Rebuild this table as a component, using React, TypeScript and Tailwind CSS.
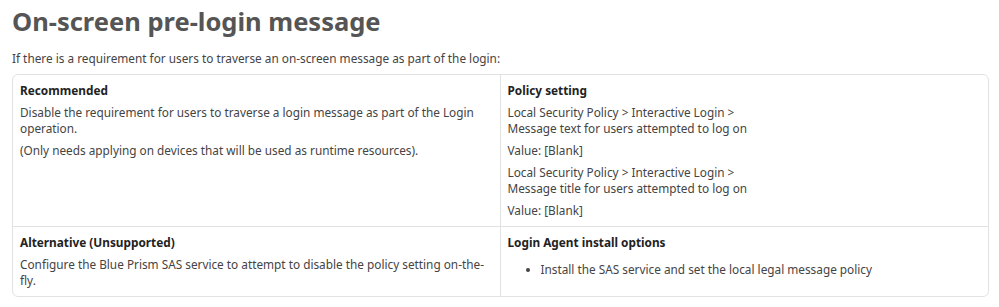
const rows = [
  {
    left: {
      title: 'Recommended',
      body: [
        'Disable the requirement for users to traverse a login message as part of the Login operation.',
        '(Only needs applying on devices that will be used as runtime resources).',
      ],
    },
    right: {
      title: 'Policy setting',
      body: [
        'Local Security Policy > Interactive Login >\nMessage text for users attempted to log on',
        'Value: [Blank]',
        'Local Security Policy > Interactive Login >\nMessage title for users attempted to log on',
        'Value: [Blank]',
      ],
    },
  },
];

function Cell({ title, children, last }: { title: string; children: React.ReactNode; last?: boolean }) {
  return (
    <div className={`px-[7px] pt-[7px] pb-[8px] ${last ? '' : 'border-r border-[#e2e2e2]'}`}>
      <div className="font-bold text-[#222]">{title}</div>
      {children}
    </div>
  );
}

export default function App() {
  return (
    <div
      className="bg-white px-3 text-[11.8px] leading-[16px] text-[#444]"
      style={{ fontFamily: '"Noto Sans", "Noto Sans CJK KR", sans-serif' }}
    >
      <h1 className="pt-[1px] text-[25.5px] font-bold leading-[40px] text-[#555]">On-screen pre-login message</h1>
      <p className="mt-[9px]">If there is a requirement for users to traverse an on-screen message as part of the login:</p>
      <div className="mt-[8px] w-[977px] overflow-hidden rounded-[6px] border border-[#e2e2e2]">
        {rows.map((r) => (
          <div key={r.left.title} className="grid grid-cols-2 border-b border-[#e2e2e2]">
            <Cell title={r.left.title}>
              {r.left.body.map((t) => (
                <p key={t} className="mt-[6px] pr-[6px]">{t}</p>
              ))}
            </Cell>
            <Cell title={r.right.title} last>
              {r.right.body.map((t) => (
                <p key={t} className="mt-[6px] whitespace-pre-line">{t}</p>
              ))}
            </Cell>
          </div>
        ))}
        <div className="grid grid-cols-2">
          <Cell title="Alternative (Unsupported)">
            <p className="mt-[6px] pr-[6px]">
              Configure the Blue Prism SAS service to attempt to disable the policy setting on-the-fly.
            </p>
          </Cell>
          <Cell title="Login Agent install options" last>
            <ul className="mt-[11px] list-disc pl-[33px]">
              <li>Install the SAS service and set the local legal message policy</li>
            </ul>
          </Cell>
        </div>
      </div>
    </div>
  );
}
